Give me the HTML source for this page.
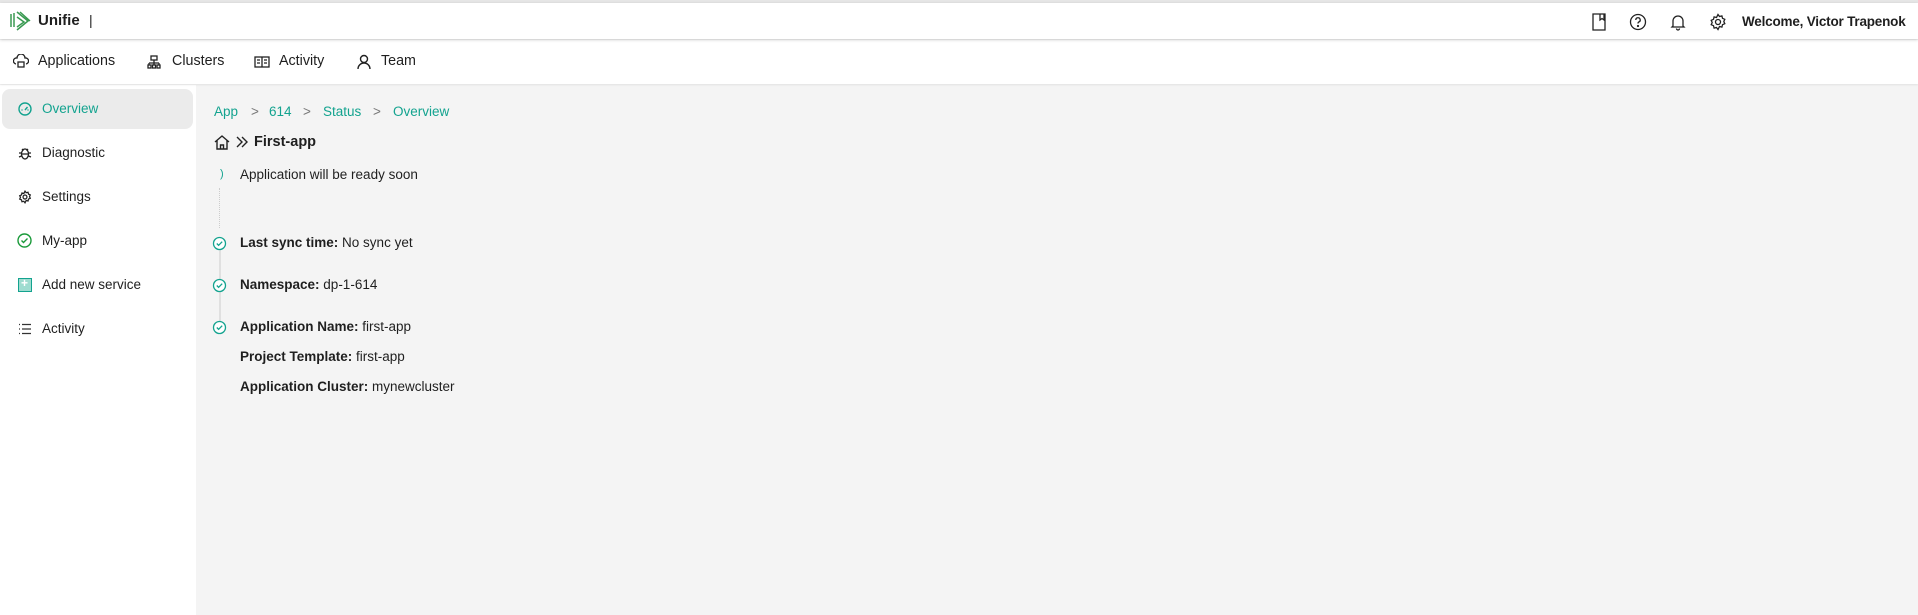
<!DOCTYPE html>
<html><head><style>
*{margin:0;padding:0;box-sizing:border-box}
body{width:1918px;height:615px;overflow:hidden;background:#f4f4f4;font-family:"Liberation Sans",sans-serif;color:#1f1f1f;position:relative}
.a{position:absolute;white-space:nowrap}
svg{position:absolute}
.t{color:#13a38f}
.g{color:#777}
.s{font-size:13.5px}
</style></head><body>
<div class="a" style="left:0;top:0;width:1918px;height:3px;background:#e6e6e6"></div>
<div class="a" style="left:0;top:3px;width:1918px;height:36px;background:#fff;box-shadow:0 1px 3px rgba(0,0,0,.18);z-index:2"></div>
<div class="a" style="left:0;top:40px;width:1918px;height:44px;background:#fff;box-shadow:0 1px 2px rgba(0,0,0,.08);z-index:1"></div>
<div class="a" style="left:0;top:85px;width:196px;height:530px;background:#fff"></div>
<div style="position:absolute;inset:0;z-index:3">
<svg style="left:9px;top:10px" width="22" height="22" viewBox="0 0 22 22" fill="none" stroke="#3a9a52" stroke-width="1.5"><path d="M2 4v13M5 3v14M8 2l11 9-11 9M8 7l7 5-7 5M11 2l10 9"/></svg>
<div class="a" style="left:38px;top:12px;font-weight:bold;font-size:15px">Unifie</div>
<div class="a" style="left:89px;top:12px;font-size:14px">|</div>
<svg style="left:1591px;top:13px" width="16" height="18" viewBox="0 0 16 18" fill="none" stroke="#222" stroke-width="1.3"><path d="M2 1h12v16H2zM9 1v6l2-1.5L13 7V1"/></svg>
<svg style="left:1629px;top:13px" width="18" height="18" viewBox="0 0 18 18" fill="none" stroke="#222" stroke-width="1.3"><circle cx="9" cy="9" r="7.5"/><path d="M6.8 7a2.2 2.2 0 1 1 3 2c-.6.3-.8.8-.8 1.5"/><circle cx="9" cy="13" r=".5" fill="#222"/></svg>
<svg style="left:1669px;top:13px" width="18" height="18" viewBox="0 0 18 18" fill="none" stroke="#222" stroke-width="1.3"><path d="M4 13V8a5 5 0 0 1 10 0v5l1 1H3zM7.5 15.5a1.5 1.5 0 0 0 3 0"/></svg>
<svg style="left:1709px;top:13px" width="18" height="18" viewBox="0 0 18 18" fill="none" stroke="#222" stroke-width="1.3"><circle cx="9" cy="9" r="2.5"/><path d="M9 1.5l1.5 2 2.4-.6.6 2.4 2.3 1-1 2.2 1 2.2-2.3 1-.6 2.4-2.4-.6L9 16.5l-1.5-2-2.4.6-.6-2.4-2.3-1 1-2.2-1-2.2 2.3-1 .6-2.4 2.4.6z"/></svg>
<div class="a" style="left:1742px;top:14px;font-weight:bold;font-size:13.5px;letter-spacing:-0.2px">Welcome, Victor Trapenok</div>

<svg style="left:13px;top:54px" width="16" height="16" viewBox="0 0 16 16" fill="none" stroke="#222" stroke-width="1.3"><path d="M3 10a3 3 0 0 1 1-6 4 4 0 0 1 8 0 3 3 0 0 1 1 6"/><rect x="5" y="8" width="6" height="5"/></svg>
<div class="a" style="left:38px;top:53px;font-size:14.3px">Applications</div>
<svg style="left:147px;top:55px" width="14" height="14" viewBox="0 0 14 14" fill="none" stroke="#222" stroke-width="1.3"><rect x="4" y="1" width="6" height="4"/><path d="M7 5v3M2 8h10M2 8v2M12 8v2M7 8v2"/><rect x="1" y="10" width="3" height="3"/><rect x="5.5" y="10" width="3" height="3"/><rect x="10" y="10" width="3" height="3"/></svg>
<div class="a" style="left:172px;top:53px;font-size:14.3px">Clusters</div>
<svg style="left:254px;top:55px" width="16" height="14" viewBox="0 0 16 14" fill="none" stroke="#222" stroke-width="1.3"><rect x="1" y="2" width="14" height="10"/><path d="M8 2v10M3 5h3M3 8h3M10 5h3M10 8h3"/></svg>
<div class="a" style="left:279px;top:53px;font-size:14.3px">Activity</div>
<svg style="left:357px;top:54px" width="14" height="16" viewBox="0 0 14 16" fill="none" stroke="#222" stroke-width="1.4"><circle cx="7" cy="5" r="3.5"/><path d="M1 15a6 6 0 0 1 12 0"/></svg>
<div class="a" style="left:381px;top:53px;font-size:14.3px">Team</div>

<div class="a" style="left:2px;top:89px;width:191px;height:40px;background:#ebebeb;border-radius:8px"></div>
<svg style="left:18px;top:102px" width="14" height="14" viewBox="0 0 14 14" fill="none" stroke="#13a38f" stroke-width="1.4"><circle cx="7" cy="7" r="6"/><path d="M7 8l2.5-3M3.5 8h1M9.5 8h1"/></svg>
<div class="a t s" style="left:42px;top:101px">Overview</div>
<svg style="left:18px;top:146px" width="14" height="14" viewBox="0 0 14 14" fill="none" stroke="#222" stroke-width="1.3"><ellipse cx="7" cy="8" rx="3.5" ry="5"/><path d="M4 3l1.5 1.5M10 3L8.5 4.5M1 7h2.5M10.5 7H13M1 11l2.5-1M13 11l-2.5-1M3.5 8h7"/></svg>
<div class="a s" style="left:42px;top:145px">Diagnostic</div>
<svg style="left:18px;top:190px" width="14" height="14" viewBox="0 0 18 18" fill="none" stroke="#222" stroke-width="1.6"><circle cx="9" cy="9" r="2.5"/><path d="M9 1.5l1.5 2 2.4-.6.6 2.4 2.3 1-1 2.2 1 2.2-2.3 1-.6 2.4-2.4-.6L9 16.5l-1.5-2-2.4.6-.6-2.4-2.3-1 1-2.2-1-2.2 2.3-1 .6-2.4 2.4.6z"/></svg>
<div class="a s" style="left:42px;top:189px">Settings</div>
<svg style="left:17px;top:233px" width="15" height="15" viewBox="0 0 15 15" fill="none" stroke="#1a9a3a" stroke-width="1.4"><circle cx="7.5" cy="7.5" r="6.5"/><path d="M4.5 7.5l2 2 4-4"/></svg>
<div class="a s" style="left:42px;top:233px">My-app</div>
<div class="a" style="left:18px;top:278px;width:14px;height:14px;background:#9fdcd0;border:1px solid #13a38f"></div>
<div class="a" style="left:21px;top:276px;font-size:12px;color:#fff;font-weight:bold">+</div>
<div class="a s" style="left:42px;top:277px">Add new service</div>
<svg style="left:18px;top:323px" width="14" height="12" viewBox="0 0 14 12" fill="none" stroke="#333" stroke-width="1.3"><path d="M1 1.5h1M1 6h1M1 10.5h1M4 1.5h9M4 6h9M4 10.5h9"/></svg>
<div class="a s" style="left:42px;top:321px">Activity</div>

<div class="a t s" style="left:214px;top:104px">App</div>
<div class="a g s" style="left:251px;top:104px">&gt;</div>
<div class="a t s" style="left:269px;top:104px">614</div>
<div class="a g s" style="left:303px;top:104px">&gt;</div>
<div class="a t s" style="left:323px;top:104px">Status</div>
<div class="a g s" style="left:373px;top:104px">&gt;</div>
<div class="a t s" style="left:393px;top:104px">Overview</div>
<svg style="left:214px;top:134px" width="16" height="16" viewBox="0 0 16 16" fill="none" stroke="#222" stroke-width="1.4"><path d="M1 8l7-6 7 6M3 6.5V15h10V6.5M6.5 15v-4h3v4"/></svg>
<svg style="left:236px;top:136px" width="12" height="12" viewBox="0 0 12 12" fill="none" stroke="#222" stroke-width="1.4"><path d="M1 1l5 5-5 5M6 1l5 5-5 5"/></svg>
<div class="a" style="left:254px;top:134px;font-weight:bold;font-size:14.5px">First-app</div>
<div class="a t" style="left:220px;top:168px;font-size:11px">)</div>
<div class="a s" style="left:240px;top:167px">Application will be ready soon</div>
<div class="a" style="left:219px;top:188px;height:40px;border-left:1px dotted #ccc"></div>
<div class="a" style="left:219px;top:250px;height:74px;width:2px;background:#e0e0e0"></div>
<svg style="left:212px;top:236px" width="15" height="15" viewBox="0 0 15 15" fill="#fff" stroke="#13a38f" stroke-width="1.3"><circle cx="7.5" cy="7.5" r="6"/><path d="M4.8 7.5l1.8 1.8 3.6-3.6" fill="none"/></svg>
<svg style="left:212px;top:278px" width="15" height="15" viewBox="0 0 15 15" fill="#fff" stroke="#13a38f" stroke-width="1.3"><circle cx="7.5" cy="7.5" r="6"/><path d="M4.8 7.5l1.8 1.8 3.6-3.6" fill="none"/></svg>
<svg style="left:212px;top:320px" width="15" height="15" viewBox="0 0 15 15" fill="#fff" stroke="#13a38f" stroke-width="1.3"><circle cx="7.5" cy="7.5" r="6"/><path d="M4.8 7.5l1.8 1.8 3.6-3.6" fill="none"/></svg>
<div class="a s" style="left:240px;top:235px"><b>Last sync time:</b> No sync yet</div>
<div class="a s" style="left:240px;top:277px"><b>Namespace:</b> dp-1-614</div>
<div class="a s" style="left:240px;top:319px"><b>Application Name:</b> first-app</div>
<div class="a s" style="left:240px;top:349px"><b>Project Template:</b> first-app</div>
<div class="a s" style="left:240px;top:379px"><b>Application Cluster:</b> mynewcluster</div>
</div>
</body></html>
